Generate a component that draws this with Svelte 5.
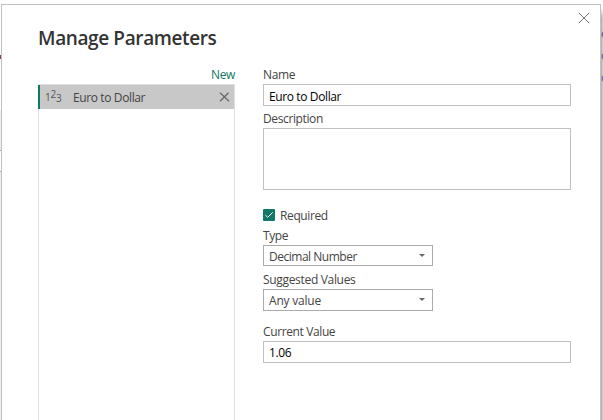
<script>
  let name = $state('Euro to Dollar');
  let description = $state('');
  let current = $state('1.06');
</script>

<div class="page">
  <div class="behind left"><i class="mark"></i><i class="box"></i></div>
  <div class="behind right"><span class="e">e</span><span class="p1">o</span><span class="p2">o</span></div>

  <section class="dialog">
    <button class="close" aria-label="Close">
      <svg width="12" height="12" viewBox="0 0 12 12"><path d="M.8.8l10.4 10.4M11.2.8L.8 11.2" /></svg>
    </button>
    <h1>Manage Parameters</h1>
    <div class="columns">
      <aside>
        <div class="new">New</div>
        <div class="list">
          <div class="item">
            <div class="number"><span>1</span><span class="two">2</span><span class="three">3</span></div>
            <span class="item-name">Euro to Dollar</span>
            <svg class="remove" width="11" height="10" viewBox="0 0 11 10"><path d="M1 .8l9 8.4M9.5.8L1 9.2" /></svg>
          </div>
        </div>
      </aside>
      <main>
        <div class="label">Name</div>
        <input class="name" aria-label="Name" bind:value={name} />
        <div class="label">Description</div>
        <textarea aria-label="Description" bind:value={description}></textarea>
        <div class="check">
          <svg width="12" height="12" viewBox="0 0 12 12"><rect width="12" height="12" rx="1" /><path d="M2.4 6.1l2.3 2.2 5-4.9" /></svg>
          <span>Required</span>
        </div>
        <div class="label type">Type</div>
        <div class="select"><span class="decimal">Decimal Number</span><i></i></div>
        <div class="label suggested">Suggested Values</div>
        <div class="select second"><span class="any">Any value</span><i></i></div>
        <div class="label current">Current Value</div>
        <input aria-label="Current Value" bind:value={current} />
      </main>
    </div>
  </section>
</div>

<style>
  :global(body) { overflow: hidden; }
  .page {
    position: relative;
    box-sizing: border-box;
    width: 603px;
    height: 420px;
    padding: 4px 2px 0 1px;
    overflow: hidden;
    background: #fff;
    color: #444;
    font: 12px/16px "Open Sans", "Noto Sans", sans-serif;
    letter-spacing: -.38px;
  }
  .dialog {
    position: relative;
    box-sizing: border-box;
    width: 600px;
    height: 440px;
    padding: 0 29px 0 36px;
    border: 1px solid #c2c2c2;
    background: #fff;
  }
  .close {
    position: absolute;
    top: 7px;
    right: 10px;
    width: 12px;
    height: 12px;
    padding: 0;
    border: 0;
    background: none;
  }
  .close svg { display: block; fill: none; stroke: #777; stroke-width: 1; }
  h1 {
    height: 62px;
    margin: 0;
    padding-top: 19px;
    box-sizing: border-box;
    font-size: 19px;
    line-height: 28px;
    font-weight: 600;
    color: #333;
    white-space: nowrap;
  }
  .columns { display: flex; justify-content: space-between; }
  aside { width: 197px; }
  .new { height: 17px; text-align: right; color: #117865; }
  .list {
    box-sizing: border-box;
    height: 350px;
    border: 1px solid #e0e0e0;
  }
  .item {
    display: flex;
    align-items: center;
    box-sizing: border-box;
    height: 24px;
    margin-left: -1px;
    padding: 0 4px 0 5px;
    border-left: 2px solid #117865;
    background: #c8c8c8;
  }
  .number { display: flex; width: 27px; font-size: 10px; line-height: 12px; letter-spacing: -.2px; color: #555; }
  .two { margin-top: -3px; }
  .three { margin-top: 1px; }
  .item-name { flex: 1; padding-top: 2px; padding-left: 1px; }
  .remove { fill: none; stroke: #666; stroke-width: 1.2; }
  main { width: 308px; }
  .label { height: 17px; white-space: nowrap; }
  input, textarea {
    display: block;
    box-sizing: border-box;
    width: 308px;
    height: 22px;
    margin: 0;
    padding: 0 5px;
    border: 1px solid #c1c1c1;
    border-radius: 0;
    outline: 0;
    color: #000;
    background: #fff;
    font: inherit;
    letter-spacing: inherit;
  }
  input { margin-bottom: 5px; }
  .name { padding-top: 2px; }
  textarea { height: 62px; resize: none; }
  .check { display: flex; align-items: center; gap: 5px; height: 16px; margin-top: 17px; }
  .check span { padding-top: 2px; }
  .check rect { fill: #117865; }
  .check path { fill: none; stroke: #fff; stroke-width: 1; }
  .type { margin-top: 5px; }
  .select {
    display: flex;
    align-items: center;
    justify-content: space-between;
    box-sizing: border-box;
    width: 170px;
    height: 21px;
    padding: 0 7px 0 5px;
    border: 1px solid #ababab;
  }
  .select i {
    border: 3px solid transparent;
    border-top-color: #666;
    border-bottom: 0;
    margin-bottom: 1px;
  }
  .decimal { padding-top: 2px; letter-spacing: -.48px; }
  .any { padding-top: 2px; letter-spacing: -.2px; }
  .suggested { margin-top: 6px; letter-spacing: -.32px; }
  .second { height: 22px; }
  .current { margin-top: 13px; }
  .behind { position: absolute; top: 0; bottom: 0; overflow: hidden; }
  .left { left: 0; width: 1px; background: #fff; }
  .left::before { content: ''; position: absolute; top: 110px; bottom: 0; width: 1px; background: #eee; }
  .mark { position: absolute; top: 55px; width: 1px; height: 4px; background: #954040; }
  .box { position: absolute; top: 150px; width: 1px; height: 20px; border: solid #aaa; border-width: 1px 0; background: #fff; }
  .right {
    z-index: 1;
    right: 0;
    width: 2px;
    color: #505c90;
    background: linear-gradient(#fff 7px, transparent 18px), linear-gradient(90deg, #b4b4b4 50%, #cacaca 50%);
  }
  .right span { position: absolute; left: 0; }
  .e { top: 26px; }
  .p1 { top: 48px; }
  .p2 { top: 70px; }
</style>
